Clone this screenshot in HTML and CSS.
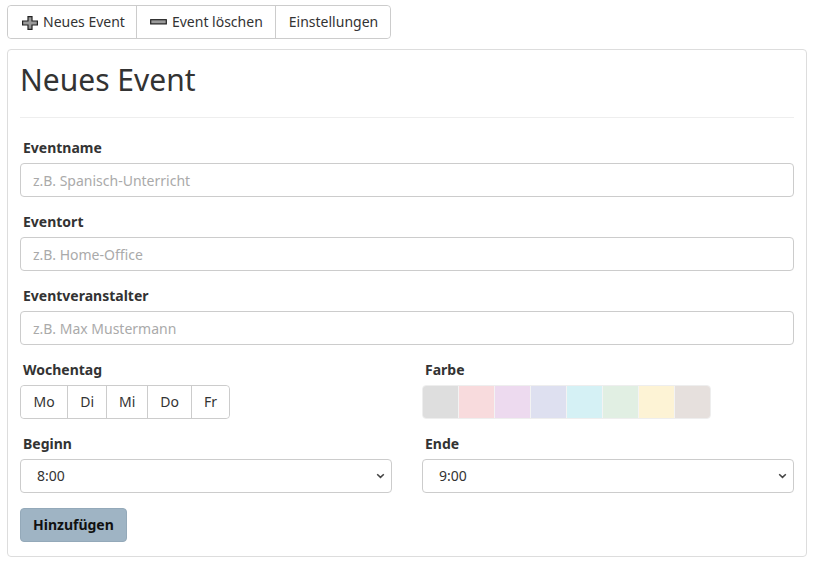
FILE: index.html
```html
<!DOCTYPE html>
<html lang="de">
<head>
<meta charset="utf-8">
<title>Neues Event</title>
<link rel="stylesheet" href="styles.css">
</head>
<body>
<div class="toolbar">
  <button class="tb-btn" type="button">
    <svg class="ic-plus" width="16" height="14" viewBox="0 0 16 14"><path d="M6 0.6h4v4.4h5.4v4H10v4.4H6V9H0.6V5H6z" fill="#9a9a9a" stroke="#222" stroke-width="1.2" stroke-linejoin="miter"/></svg>
    Neues Event
  </button>
  <button class="tb-btn" type="button">
    <svg class="ic-minus" width="17" height="6" viewBox="0 0 17 6"><rect x="0.7" y="0.7" width="15.6" height="4.2" fill="#9a9a9a" stroke="#222" stroke-width="1.2"/></svg>
    Event löschen
  </button>
  <button class="tb-btn" type="button">Einstellungen</button>
</div>

<div class="card">
  <h1 class="card-title">Neues Event</h1>
  <form class="form">
    <div class="field">
      <label class="lbl">Eventname</label>
      <input class="inp" type="text" placeholder="z.B. Spanisch-Unterricht">
    </div>
    <div class="field">
      <label class="lbl">Eventort</label>
      <input class="inp" type="text" placeholder="z.B. Home-Office">
    </div>
    <div class="field">
      <label class="lbl">Eventveranstalter</label>
      <input class="inp" type="text" placeholder="z.B. Max Mustermann">
    </div>
    <div class="row">
      <div class="field">
        <label class="lbl">Wochentag</label>
        <div class="days">
          <button class="day" type="button">Mo</button>
          <button class="day" type="button">Di</button>
          <button class="day" type="button">Mi</button>
          <button class="day" type="button">Do</button>
          <button class="day" type="button">Fr</button>
        </div>
      </div>
      <div class="field">
        <label class="lbl">Farbe</label>
        <div class="colors">
          <span class="sw sw-gray"></span>
          <span class="sw sw-red"></span>
          <span class="sw sw-purple"></span>
          <span class="sw sw-indigo"></span>
          <span class="sw sw-cyan"></span>
          <span class="sw sw-green"></span>
          <span class="sw sw-yellow"></span>
          <span class="sw sw-brown"></span>
        </div>
      </div>
    </div>
    <div class="row">
      <div class="field">
        <label class="lbl">Beginn</label>
        <div class="sel-wrap">
          <select class="sel"><option>8:00</option></select>
          <svg class="chev" width="9" height="6" viewBox="0 0 9 6"><path d="M1.2 1.2l3.3 3.2 3.3-3.2" fill="none" stroke="#444" stroke-width="1.5"/></svg>
        </div>
      </div>
      <div class="field">
        <label class="lbl">Ende</label>
        <div class="sel-wrap">
          <select class="sel"><option>9:00</option></select>
          <svg class="chev" width="9" height="6" viewBox="0 0 9 6"><path d="M1.2 1.2l3.3 3.2 3.3-3.2" fill="none" stroke="#444" stroke-width="1.5"/></svg>
        </div>
      </div>
    </div>
    <div>
      <button class="submit" type="button">Hinzufügen</button>
    </div>
  </form>
</div>
</body>
</html>
```
FILE: styles.css
```css
* { box-sizing: border-box; }
html, body { margin: 0; background: #fff; }
body {
  padding: 5px 10px 0 7px;
  font-family: "Noto Sans", "Open Sans", sans-serif;
  font-size: 14px;
  color: #333;
}
.toolbar {
  display: flex;
  width: fit-content;
  border: 1px solid #ccc;
  border-radius: 4px;
  height: 34px;
}
.tb-btn {
  display: flex;
  align-items: center;
  gap: 5px;
  font: inherit;
  font-size: 14px;
  color: #333;
  background: #fff;
  border: 0;
  border-left: 1px solid #ccc;
  padding: 0 12px 2px 13px;
  height: 32px;
  border-radius: 0;
}
.tb-btn:first-child { border-left: 0; border-radius: 4px 0 0 4px; padding-left: 14px; padding-right: 11px; }
.tb-btn:last-child { border-radius: 0 4px 4px 0; }
.ic-plus { display: block; margin-top: 3px; }
.ic-minus { display: block; margin-top: 2px; }

.card {
  margin-top: 10px;
  border: 1px solid #ddd;
  border-radius: 4px;
  padding: 12px 12px 14px 12px;
}
.card-title {
  margin: 0;
  font-weight: 400;
  font-size: 30px;
  line-height: 36px;
  color: #333;
  padding: 0 0 19px 0;
  border-bottom: 1px solid #eee;
}
.form {
  display: flex;
  flex-direction: column;
  gap: 15px;
  padding-top: 20px;
}
.field { display: flex; flex-direction: column; gap: 5px; min-width: 0; }
.lbl {
  font-weight: 700;
  line-height: 20px;
  padding-left: 3px;
  color: #333;
}
.inp, .sel {
  height: 34px;
  width: 100%;
  border: 1px solid #ccc;
  border-radius: 4px;
  font: inherit;
  font-size: 14px;
  color: #333;
  background: #fff;
}
.inp { padding: 0 12px; }
.inp::placeholder { color: #aaa; }
.sel-wrap { position: relative; }
.sel {
  display: block;
  appearance: none;
  -webkit-appearance: none;
  padding: 0 24px 2px 16px;
}
.chev {
  position: absolute;
  right: 7px;
  top: 14px;
  pointer-events: none;
}
.row {
  display: grid;
  grid-template-columns: 1fr 1fr;
  column-gap: 30px;
}
.days {
  display: flex;
  align-self: flex-start;
  border: 1px solid #ccc;
  border-radius: 4px;
  height: 34px;
}
.day {
  font: inherit;
  font-size: 14px;
  color: #333;
  background: #fff;
  border: 0;
  border-left: 1px solid #ccc;
  padding: 0 12px 2px;
  height: 32px;
  border-radius: 0;
}
.day:first-child { border-left: 0; border-radius: 4px 0 0 4px; padding: 0 12.5px 2px; }
.day:last-child { border-radius: 0 4px 4px 0; }
.colors {
  display: flex;
  align-self: flex-start;
  border: 1px solid #eee;
  border-radius: 4px;
  height: 34px;
  overflow: hidden;
}
.sw { width: 36px; height: 32px; border-left: 1px solid #f3f3f3; }
.sw:first-child { border-left: 0; width: 35px; }
.sw-gray { background: #dedede; }
.sw-red { background: #f8dbdd; }
.sw-purple { background: #eddaef; }
.sw-indigo { background: #dee0f0; }
.sw-cyan { background: #d5f1f5; }
.sw-green { background: #e1efe3; }
.sw-yellow { background: #fdf3d5; }
.sw-brown { background: #e6e0dd; }
.submit {
  font: inherit;
  font-size: 14px;
  font-weight: 700;
  color: #111;
  background: #9fb4c4;
  border: 1px solid #94a9b9;
  border-radius: 4px;
  height: 34px;
  padding: 0 12px 2px;
}
```
